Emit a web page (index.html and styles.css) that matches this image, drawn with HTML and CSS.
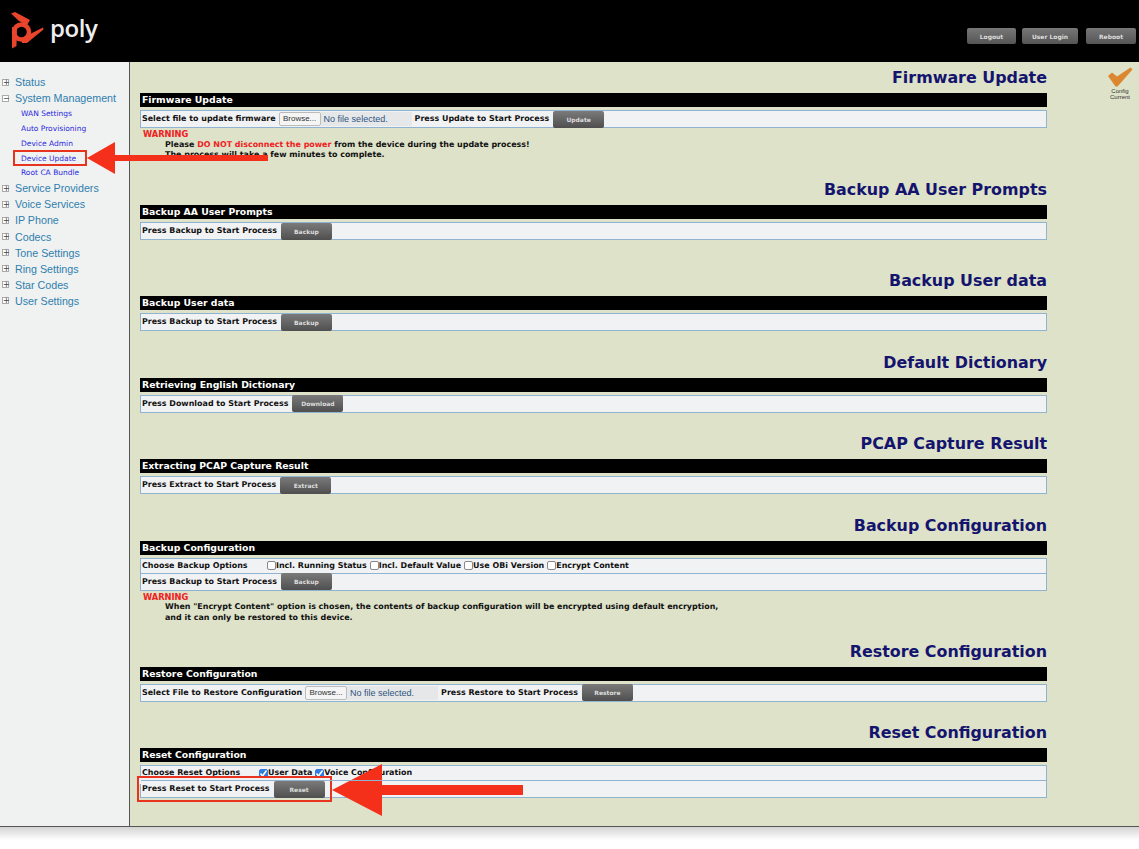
FILE: index.html
```html
<!DOCTYPE html>
<html lang="en">
<head>
<meta charset="utf-8">
<title>Device Update</title>
<link rel="stylesheet" href="styles.css">
</head>
<body>
<header class="topbar">
  <div class="logo">
    <svg class="logo-mark" width="33" height="37" viewBox="0 0 33 37"><circle cx="10.500" cy="20" r="7.500" fill="none" stroke="#e8452c" stroke-width="4.500"/><path d="M0 1.500 L4 0 L19 8 L16 13 L8 9 Z" fill="#e8452c"/><path d="M1 15 L6 15 L5.500 34 L1 36.500 Z" fill="#e8452c"/><path d="M11 26 L32 15.500 L32.500 17.500 L16 31 L11 31 Z" fill="#e8452c"/></svg>
    <span class="logo-text">poly</span>
  </div>
  <nav class="top-actions">
    <button class="top-btn btn-logout">Logout</button>
    <button class="top-btn btn-login">User Login</button>
    <button class="top-btn btn-reboot">Reboot</button>
  </nav>
</header>
<div class="shell">
  <aside class="sidebar">
    <ul class="tree">
      <li class="node"><span class="toggle">+</span>Status</li>
      <li class="node"><span class="toggle">−</span>System Management</li>
      <li class="leaf">WAN Settings</li>
      <li class="leaf">Auto Provisioning</li>
      <li class="leaf">Device Admin</li>
      <li class="leaf">Device Update</li>
      <li class="leaf">Root CA Bundle</li>
      <li class="node"><span class="toggle">+</span>Service Providers</li>
      <li class="node"><span class="toggle">+</span>Voice Services</li>
      <li class="node"><span class="toggle">+</span>IP Phone</li>
      <li class="node"><span class="toggle">+</span>Codecs</li>
      <li class="node"><span class="toggle">+</span>Tone Settings</li>
      <li class="node"><span class="toggle">+</span>Ring Settings</li>
      <li class="node"><span class="toggle">+</span>Star Codes</li>
      <li class="node"><span class="toggle">+</span>User Settings</li>
    </ul>
  </aside>
  <main class="content">
    <section class="panel gap-a">
      <h2>Firmware Update</h2>
      <h3>Firmware Update</h3>
      <div class="box"><div class="row">Select file to update firmware<span class="browse">Browse...</span><span class="nofile">No file selected.</span><span class="after">Press Update to Start Process</span><button class="btn">Update</button></div></div>
      <div class="warn"><b>WARNING</b><p>Please <em>DO NOT disconnect the power</em> from the device during the update process!<br>The process will take a few minutes to complete.</p></div>
    </section>
    <section class="panel gap-b">
      <h2>Backup AA User Prompts</h2>
      <h3>Backup AA User Prompts</h3>
      <div class="box"><div class="row">Press Backup to Start Process<button class="btn">Backup</button></div></div>
    </section>
    <section class="panel gap-c">
      <h2>Backup User data</h2>
      <h3>Backup User data</h3>
      <div class="box"><div class="row">Press Backup to Start Process<button class="btn">Backup</button></div></div>
    </section>
    <section class="panel gap-c">
      <h2>Default Dictionary</h2>
      <h3>Retrieving English Dictionary</h3>
      <div class="box"><div class="row">Press Download to Start Process<button class="btn">Download</button></div></div>
    </section>
    <section class="panel gap-c">
      <h2>PCAP Capture Result</h2>
      <h3>Extracting PCAP Capture Result</h3>
      <div class="box"><div class="row">Press Extract to Start Process<button class="btn">Extract</button></div></div>
    </section>
    <section class="panel gap-d">
      <h2>Backup Configuration</h2>
      <h3>Backup Configuration</h3>
      <div class="box">
        <div class="row row-split"><span class="opt-label">Choose Backup Options</span><label><span class="cb"></span>Incl. Running Status</label><label><span class="cb"></span>Incl. Default Value</label><label><span class="cb"></span>Use OBi Version</label><label><span class="cb"></span>Encrypt Content</label></div>
        <div class="row">Press Backup to Start Process<button class="btn">Backup</button></div>
      </div>
      <div class="warn"><b>WARNING</b><p>When "Encrypt Content" option is chosen, the contents of backup configuration will be encrypted using default encryption,<br>and it can only be restored to this device.</p></div>
    </section>
    <section class="panel gap-c">
      <h2>Restore Configuration</h2>
      <h3>Restore Configuration</h3>
      <div class="box"><div class="row">Select File to Restore Configuration<span class="browse">Browse...</span><span class="nofile">No file selected.</span><span class="after">Press Restore to Start Process</span><button class="btn">Restore</button></div></div>
    </section>
    <section class="panel">
      <h2>Reset Configuration</h2>
      <h3>Reset Configuration</h3>
      <div class="box">
        <div class="row row-split"><span class="opt-label opt-label-reset">Choose Reset Options</span><label><span class="cb on"><svg width="9" height="9" viewBox="0 0 9 9"><path d="M1.500 4.500 L3.500 7 L7.500 1.500" fill="none" stroke="#fff" stroke-width="1.500"/></svg></span>User Data</label><label><span class="cb on"><svg width="9" height="9" viewBox="0 0 9 9"><path d="M1.500 4.500 L3.500 7 L7.500 1.500" fill="none" stroke="#fff" stroke-width="1.500"/></svg></span>Voice Configuration</label></div>
        <div class="row row-top">Press Reset to Start Process<button class="btn">Reset</button></div>
      </div>
    </section>
  </main>
  <aside class="status">
    <svg width="26" height="20" viewBox="0 0 26 20"><path d="M1 9 L5 5.500 L10 9.500 L23.500 0.500 L25.500 2.500 L10.500 19.500 L8.500 19.500 Z" fill="#dd8630"/></svg>
    <span>Config<br>Current</span>
  </aside>
  <div class="callout-box callout-device"></div>
  <div class="callout-box callout-reset"></div>
  <svg class="arrow arrow-top" width="181" height="50" viewBox="0 0 181 50"><path d="M0 25 L28 9 L28 22 L181 22 L181 28 L28 28 L28 41 Z" fill="#f4301b"/></svg>
  <svg class="arrow arrow-bottom" width="195" height="52" viewBox="0 0 195 52"><path d="M0 26 L50 0 L50 21 L191 21 L191 31 L50 31 L50 52 Z" fill="#f4301b"/></svg>
</div>
<div class="foot"></div>
</body>
</html>
```
FILE: styles.css
```css
* { box-sizing: border-box; }
html, body { margin: 0; padding: 0; height: 100%; background: #fff; overflow: hidden; }
body { font-family: "DejaVu Sans", sans-serif; }

.topbar { height: 62px; background: #000; display: flex; justify-content: space-between; position: relative; z-index: 1; }
.logo { display: flex; align-items: flex-start; padding: 12px 0 0 11px; }
.logo-mark { display: block; overflow: visible; }
.logo-text { font-family: "Open Sans", sans-serif; font-weight: 600; font-size: 24px; line-height: 30px; color: #eee; margin-left: 6px; letter-spacing: -0.4px; margin-top: 1px; }
.top-actions { display: flex; padding: 28px 3px 0 0; align-items: flex-start; }
.top-btn { height: 16px; padding: 0; border: 0; border-radius: 2px; background: linear-gradient(#777, #555); color: #ddd; font: bold 6px "DejaVu Sans", sans-serif; }
.btn-logout { width: 49px; margin-right: 6px; }
.btn-login { width: 56px; margin-right: 8px; }
.btn-reboot { width: 50px; }

.shell { position: relative; height: 765px; display: flex; background: #dde2c8; border-bottom: 1px solid #555; }
.sidebar { width: 130px; flex: none; background: #f0f1f1; border-right: 1px solid #555; padding-top: 12px; }
.tree { list-style: none; margin: 0; padding: 0; }
.node { height: 16.100px; font: 10.700px/16px "Liberation Sans", sans-serif; color: #2f7fae; display: flex; align-items: center; padding-left: 2px; white-space: nowrap; }
.toggle { width: 7px; height: 7px; border: 1px solid #aaa; background: #fff; color: #444; font: 8px/5px "DejaVu Sans", sans-serif; text-align: center; margin-right: 6px; flex: none; }
.leaf { height: 14.800px; font: 7.500px/15px "DejaVu Sans", sans-serif; color: #2a2ae0; padding-left: 21px; white-space: nowrap; }

.content { width: 917px; flex: none; padding: 5px 0 0 10px; }
.panel { width: 907px; }
h2 { margin: 0 0 5px 0; padding-top: 1px; font: bold 15.900px/20px "DejaVu Sans", sans-serif; color: #14146e; text-align: right; }
h3 { margin: 0; height: 14px; background: #000; color: #fff; font: bold 9.300px/14px "DejaVu Sans", sans-serif; padding-left: 2px; }
.box { margin-top: 3px; border: 1px solid #8fb3d0; background: #f1f2f3; }
.row { height: 16px; font: bold 7.950px/16px "DejaVu Sans", sans-serif; color: #111; padding-left: 1px; display: flex; align-items: center; white-space: nowrap; }
.row + .row { border-top: 1px solid #8fb3d0; height: 17px; }
.row-split { height: 14px; }
.row-top { position: relative; z-index: 1; }
.opt-label { width: 125px; }
.opt-label-reset { width: 117px; }
.row label { display: flex; align-items: center; margin-right: 3px; }
.cb { width: 9px; height: 9px; border: 1px solid #888; border-radius: 2px; background: #fff; flex: none; position: relative; }
.cb svg { display: block; margin: -1px; }
.cb.on { background: #2f7de0; border-color: #2f7de0; }
.browse { margin-left: 3px; width: 42px; height: 14px; border: 1px solid #bbb; border-radius: 2px; background: #f5f5f5; color: #333; font: 8px/12px "Liberation Sans", sans-serif; text-align: center; flex: none; }
.nofile { width: 91px; height: 14px; background: #e6e7e9; color: #2d5580; font: 9px/14px "Liberation Sans", sans-serif; padding-left: 3px; flex: none; }
.after { margin-left: 3px; }
.btn { margin-left: 4px; width: 51px; height: 17px; padding: 0; border: 0; border-radius: 2px; background: linear-gradient(#7a7a7a, #4f4f4f); color: #ddd; font: bold 6px "DejaVu Sans", sans-serif; flex: none; }
.warn { color: #111; font: bold 7.950px/10.500px "DejaVu Sans", sans-serif; padding: 2px 0 0 3px; }
.warn b { color: #f02020; display: block; font-size: 8.300px; line-height: 9.500px; }
.warn p { margin: 0 0 0 22px; }
.warn em { color: #f02020; font-style: normal; }
.gap-a { height: 112px; }
.gap-b { height: 91px; }
.gap-c { height: 81.500px; }
.gap-d { height: 126px; }

.status { flex: 1; display: flex; flex-direction: column; align-items: center; padding: 5px 6px 0 60px; font: 6px/6px "Liberation Sans", sans-serif; color: #333; text-align: center; }
.status span { margin-top: 1px; }

.callout-box { position: absolute; border: 2px solid #e8341f; }
.callout-device { left: 13px; top: 88px; width: 74px; height: 16px; }
.callout-reset { left: 137px; top: 714px; width: 195px; height: 26px; background: linear-gradient(#f1f2f3 0 6px, transparent 6px); }
.arrow { position: absolute; }
.arrow-top { left: 87px; top: 71px; }
.arrow-bottom { left: 332px; top: 702px; }

.foot { height: 22px; background: linear-gradient(#d4d4d4, #fff 60%); }
```
